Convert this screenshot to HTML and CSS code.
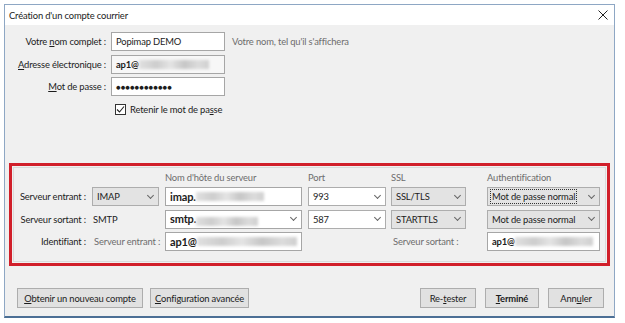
FILE: index.html
```html
<!DOCTYPE html>
<html>
<head>
    <title>Création d'un compte courrier</title>
    <link rel="stylesheet" href="styles.css">
</head>
<body>
    <div class="dialog">
        <div class="titlebar">
            <span>Création d'un compte courrier</span>
            <svg class="close" width="10" height="10" viewBox="0 0 10 10"><path d="M0.5 0.5 L9.5 9.5 M9.5 0.5 L0.5 9.5" stroke="#222" stroke-width="1"/></svg>
        </div>

        <div class="content">
            <!-- identite -->
            <div class="identity">
                <label>Votre <u>n</u>om complet :</label>
                <div class="field">Popimap DEMO</div>
                <span class="hint">Votre nom, tel qu'il s'affichera</span>

                <label><u>A</u>dresse électronique :</label>
                <div class="field grey"><b>ap1@</b><span class="blur" style="width: 70px"></span></div>
                <span></span>

                <label><u>M</u>ot de passe :</label>
                <div class="field"><b class="dots">●●●●●●●●●●●●</b></div>
                <span></span>

                <span></span>
                <div class="remember">
                    <span class="checkbox"><svg width="9" height="9" viewBox="0 0 9 9"><path d="M1 4.5 L3.5 7 L8 1.5" fill="none" stroke="#222" stroke-width="1.1"/></svg></span>
                    <span>Retenir le mot de pa<u>s</u>se</span>
                </div>
                <span></span>
            </div>

            <!-- serveurs -->
            <div class="servers">
                <div class="groupbox">
                    <span></span>
                    <span></span>
                    <span class="head">Nom d'hôte du serveur</span>
                    <span class="head">Port</span>
                    <span class="head">SSL</span>
                    <span class="head">Authentification</span>

                    <label>Serveur entrant :</label>
                    <div class="select w-type">IMAP <i class="chev"></i></div>
                    <div class="field host"><b>imap.</b><span class="blur" style="width: 68px"></span></div>
                    <div class="select white w-port">993 <i class="chev"></i></div>
                    <div class="select w-ssl">SSL/TLS <i class="chev"></i></div>
                    <div class="select w-auth"><span class="focus">Mot de passe normal</span> <i class="chev"></i></div>

                    <label>Serveur sortant :</label>
                    <span class="plain">SMTP</span>
                    <div class="field host combo"><span><b>smtp.</b><span class="blur" style="width: 62px"></span></span><i class="chev"></i></div>
                    <div class="select white w-port">587 <i class="chev"></i></div>
                    <div class="select w-ssl">STARTTLS <i class="chev"></i></div>
                    <div class="select w-auth">Mot de passe normal <i class="chev"></i></div>

                    <label>Identifiant :</label>
                    <span class="sub">Serveur entrant :</span>
                    <div class="field host"><b>ap1@</b><span class="blur" style="width: 100px"></span></div>
                    <span></span>
                    <span class="sub">Serveur sortant :</span>
                    <div class="field w-auth"><b>ap1@</b><span class="blur" style="width: 78px"></span></div>
                </div>
            </div>

            <!-- boutons -->
            <div class="actions">
                <div class="group">
                    <button class="b-new"><u>O</u>btenir un nouveau compte</button>
                    <button class="b-adv"><u>C</u>onfiguration avancée</button>
                </div>
                <div class="group right">
                    <button class="b-std">Re-<u>t</u>ester</button>
                    <button class="b-std default"><u>T</u>erminé</button>
                    <button class="b-std">Ann<u>u</u>ler</button>
                </div>
            </div>
        </div>
    </div>
</body>
</html>
```

FILE: styles.css
```css
body { margin: 0; background: #fff; font-family: Lato, "Noto Sans", sans-serif; font-size: 9.4px; letter-spacing: -0.15px; color: #1c1c1c; white-space: nowrap; }
u { text-decoration-thickness: 1px; text-underline-offset: 1px; }

.dialog {
    margin: 4px 0 0 4px;
    width: 611px;
    height: 314px;
    box-sizing: border-box;
    border: 1px solid #8ea7c4;
    border-bottom: 2px solid #4c6f95;
    background: #f0f0f0;
    display: flex;
    flex-direction: column;
}
.titlebar {
    height: 20px;
    background: #fff;
    display: flex;
    align-items: center;
    justify-content: space-between;
    padding: 0 5px 0 4px;
    flex-shrink: 0;
}
.close { margin-right: 1px; }

.content { flex: 1; display: flex; flex-direction: column; padding-top: 7px; }

/* identite */
.identity {
    display: grid;
    grid-template-columns: 106px 121px auto;
    grid-auto-rows: 19px;
    row-gap: 3.5px;
    align-items: center;
}
.identity label { text-align: right; padding-right: 5px; }
.identity .field { width: 114px; }
.hint { color: #6d6d6d; }
.remember { display: flex; align-items: center; gap: 4px; padding-left: 4px; height: 12px; }
.checkbox {
    width: 11px;
    height: 11px;
    box-sizing: border-box;
    border: 1px solid #333;
    background: #fff;
    display: flex;
    align-items: center;
    justify-content: center;
}

.field {
    height: 19px;
    box-sizing: border-box;
    border: 1px solid #a6a6a6;
    background: #fff;
    padding: 0 4px;
    display: flex;
    align-items: center;
    overflow: hidden;
}
.field.grey { background: #f7f7f7; }
.field b { font-weight: 700; }
.dots { font-size: 7.6px; letter-spacing: 0.1px; }
.blur {
    display: inline-block;
    height: 9px;
    background: linear-gradient(90deg, #e0e0e0, #cdcdcd 25%, #e4e4e4 45%, #c6c6c6 65%, #dcdcdc 85%, #cfcfcf);
    filter: blur(1.4px);
    vertical-align: middle;
}

/* serveurs */
.servers {
    margin: 44px 4px 0 4px;
    border: 3px solid #d11f2a;
    padding: 1px;
}
.groupbox {
    border: 1px solid #dadada;
    padding: 4px 0 10px 0;
    display: grid;
    grid-template-columns: 78px 73px 143px 83px 96px 1fr;
    grid-template-rows: 12px;
    grid-auto-rows: 19px;
    row-gap: 3.5px;
    align-items: center;
}
.groupbox label { text-align: right; padding-right: 6px; }
.head, .sub { color: #6d6d6d; }
.plain { padding-left: 1px; }
.sub { padding-left: 2px; }
.groupbox .field.host { width: 137px; }
.groupbox .field.host b { font-size: 11px; }
.combo { justify-content: space-between; padding-right: 5px; }

.select {
    height: 19px;
    box-sizing: border-box;
    border: 1px solid #adadad;
    background: #e3e3e3;
    display: flex;
    align-items: center;
    justify-content: space-between;
    padding: 0 5px 0 4px;
}
.select.white { background: #fff; }
.w-type { width: 67px; }
.w-port { width: 78px; }
.w-ssl { width: 75px; }
.w-auth { width: 113px; }
.focus { outline: 1px dotted #333; outline-offset: 1px; }
.chev {
    width: 4px;
    height: 4px;
    border-right: 1px solid #666;
    border-bottom: 1px solid #666;
    transform: rotate(45deg);
    margin-top: -3px;
    flex-shrink: 0;
}

/* boutons */
.actions {
    margin-top: auto;
    display: flex;
    justify-content: space-between;
    padding: 0 10px 8px 12px;
}
.group { display: flex; gap: 7px; }
.group.right { gap: 9px; }
button {
    height: 20px;
    font-family: inherit;
    font-size: 9.4px;
    letter-spacing: -0.15px;
    color: #1c1c1c;
    background: #e1e1e1;
    border: 1px solid #adadad;
    padding: 0;
    white-space: nowrap;
}
.b-new { width: 126px; }
.b-adv { width: 99px; }
.b-std { width: 56px; }
.default { font-weight: 700; width: 54px; }
```
